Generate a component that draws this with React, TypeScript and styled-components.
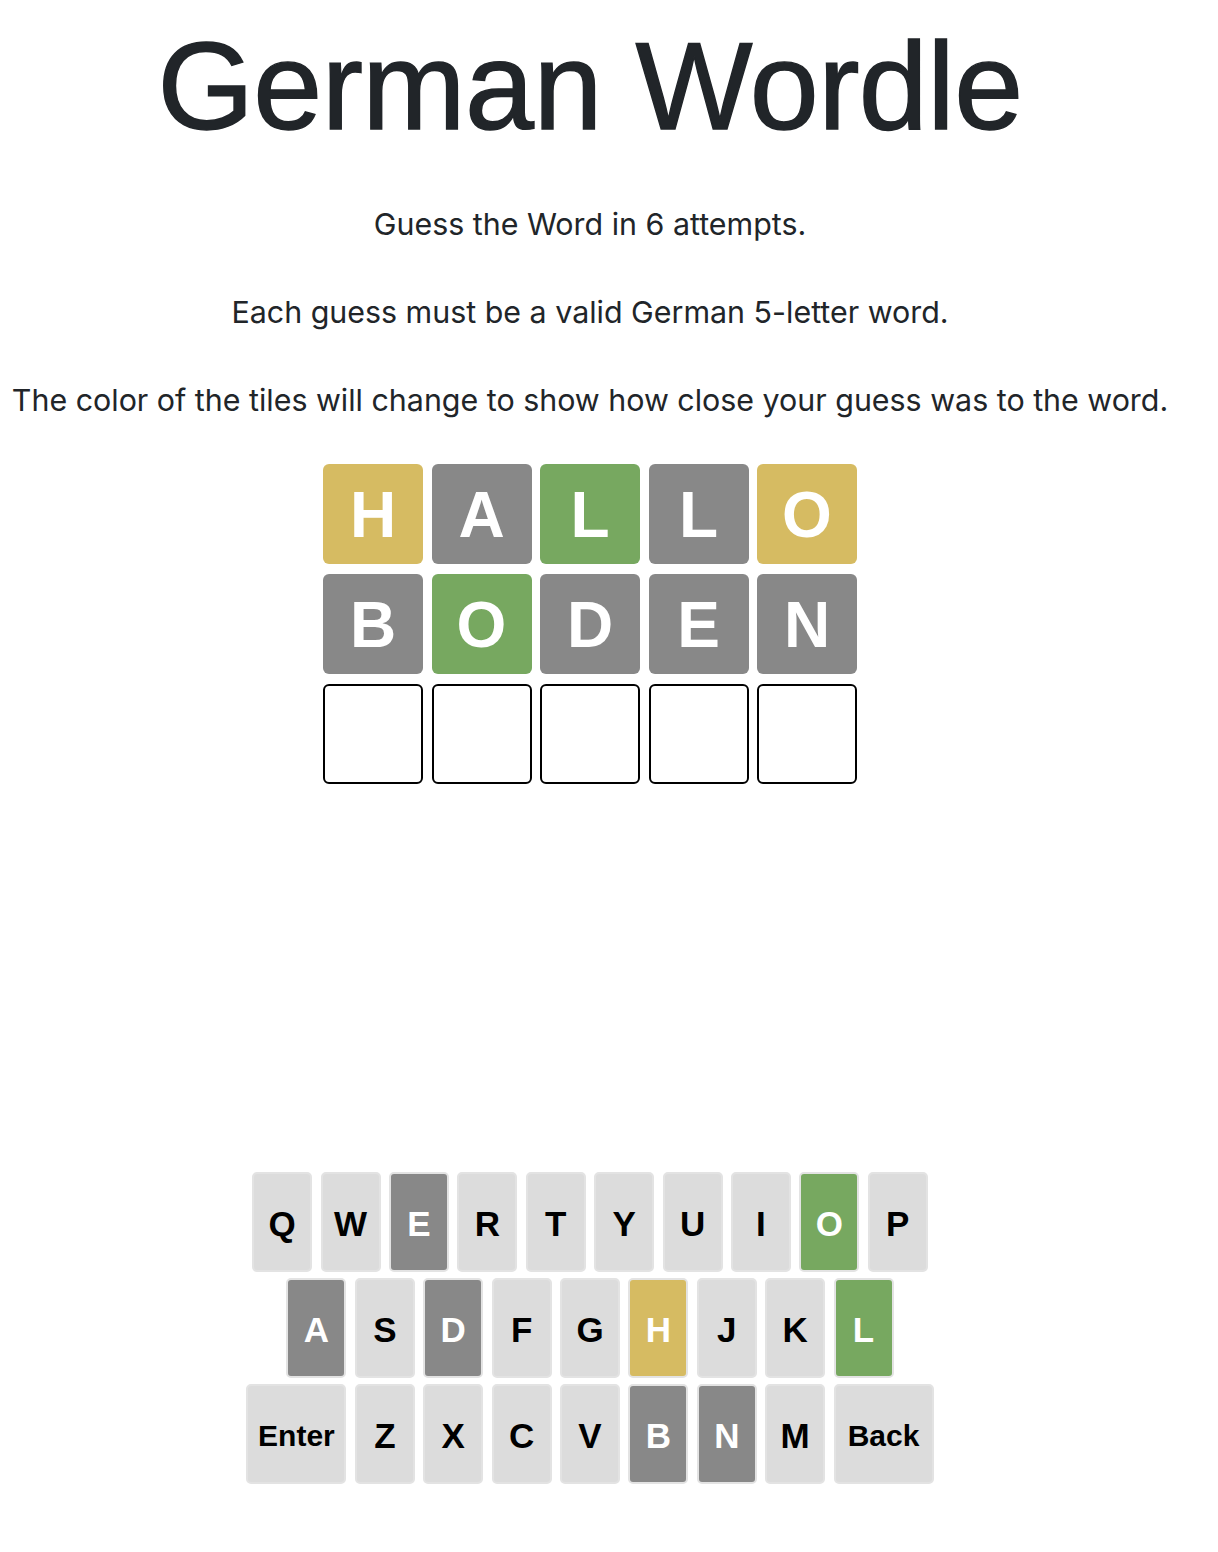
import React from "react";
import styled, { createGlobalStyle } from "styled-components";

const Global = createGlobalStyle`
  html, body { margin: 0; padding: 0; background: #fff; }
  body { font-family: Inter, "Noto Sans", sans-serif; color: #212529; }
`;

const Page = styled.main`
  width: 1180px;
  display: flex;
  flex-direction: column;
  align-items: center;
`;

const Title = styled.h1`
  margin: 12px 0 0;
  font-family: "Liberation Sans", Arial, sans-serif;
  font-weight: 400;
  font-size: 124px;
  line-height: 1.2;
  color: #212529;
  letter-spacing: -0.6px;
  -webkit-text-stroke: 1.4px #212529;
`;

const Intro = styled.p<{ $top?: number }>`
  margin: ${(p) => p.$top ?? 0}px 0 0;
  font-size: 30.4px;
  line-height: 46px;
  text-align: center;
  white-space: nowrap;
`;

const Board = styled.div`
  margin-top: 41px;
  display: grid;
  grid-template-columns: repeat(5, 100px);
  column-gap: 8.5px;
  row-gap: 10px;
`;

type State = "present" | "absent" | "correct" | "empty" | "unused";

const colors: Record<State, string> = {
  present: "#d6bb62",
  absent: "#888888",
  correct: "#77a860",
  empty: "#ffffff",
  unused: "#dddddd",
};

const Tile = styled.div<{ $s: State }>`
  width: 100px;
  height: 100px;
  box-sizing: border-box;
  border-radius: 6px;
  background: ${(p) => colors[p.$s]};
  border: ${(p) => (p.$s === "empty" ? "2px solid #000" : "none")};
  display: flex;
  align-items: center;
  justify-content: center;
  padding-top: 3px;
  color: #fff;
  font-family: "Liberation Sans", Arial, sans-serif;
  font-weight: 700;
  font-size: 64px;
`;

const Keyboard = styled.div`
  margin-top: 388px;
  display: flex;
  flex-direction: column;
  align-items: center;
  gap: 6px;
`;

const KeyRow = styled.div`
  display: flex;
  gap: 8.4px;
`;

const Key = styled.div<{ $s: State; $wide?: boolean }>`
  width: ${(p) => (p.$wide ? 100 : 60)}px;
  height: 100px;
  box-sizing: border-box;
  border-radius: 5px;
  border: 2px solid #e3e3e3;
  background: ${(p) => (p.$s === "unused" ? "#dcdcdc" : colors[p.$s])};
  color: ${(p) => (p.$s === "unused" ? "#000" : "#fff")};
  display: flex;
  align-items: center;
  justify-content: center;
  padding-top: 4px;
  font-family: "Liberation Sans", Arial, sans-serif;
  font-weight: 700;
  font-size: ${(p) => (p.$wide ? 30 : 35)}px;
`;

const guesses: [string, State][][] = [
  [["H", "present"], ["A", "absent"], ["L", "correct"], ["L", "absent"], ["O", "present"]],
  [["B", "absent"], ["O", "correct"], ["D", "absent"], ["E", "absent"], ["N", "absent"]],
  [["", "empty"], ["", "empty"], ["", "empty"], ["", "empty"], ["", "empty"]],
];

const keyState: Record<string, State> = {
  E: "absent", O: "correct", A: "absent", D: "absent", H: "present", L: "correct", B: "absent", N: "absent",
};

const rows = [
  ["Q", "W", "E", "R", "T", "Y", "U", "I", "O", "P"],
  ["A", "S", "D", "F", "G", "H", "J", "K", "L"],
  ["Enter", "Z", "X", "C", "V", "B", "N", "M", "Back"],
];

export default function App() {
  return (
    <Page>
      <Global />
      <Title>German Wordle</Title>
      <Intro $top={40}>Guess the Word in 6 attempts.</Intro>
      <Intro $top={42}>Each guess must be a valid German 5-letter word.</Intro>
      <Intro $top={42}>The color of the tiles will change to show how close your guess was to the word.</Intro>
      <Board>
        {guesses.flat().map(([l, s], i) => (
          <Tile key={i} $s={s}>{l}</Tile>
        ))}
      </Board>
      <Keyboard>
        {rows.map((r, i) => (
          <KeyRow key={i}>
            {r.map((k) => (
              <Key key={k} $s={keyState[k] ?? "unused"} $wide={k.length > 1}>{k}</Key>
            ))}
          </KeyRow>
        ))}
      </Keyboard>
    </Page>
  );
}
